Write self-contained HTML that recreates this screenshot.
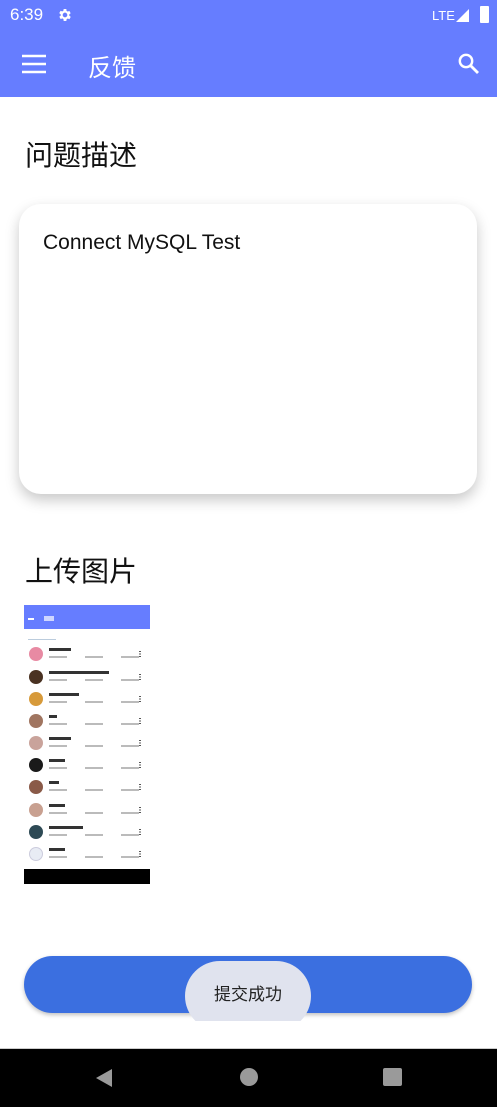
<!DOCTYPE html>
<html><head><meta charset="utf-8"><style>
*{margin:0;padding:0;box-sizing:border-box}
body{width:497px;height:1107px;position:relative;background:#fff;font-family:"Liberation Sans","Noto Sans CJK SC",sans-serif;overflow:hidden}
.abs{position:absolute}
.top{left:0;top:0;width:497px;height:97px;background:#667dff}
.h{font-size:28px;color:#111;left:25px}
.card{left:19px;top:204px;width:458px;height:290px;border-radius:22px;background:#fff;box-shadow:0 6px 14px rgba(0,0,0,.22)}
.thumb{left:24px;top:605px;width:126px;height:279px;background:#fff;overflow:hidden}
.row{position:absolute;left:0;width:126px;height:23px}
.av{position:absolute;left:5px;top:4px;width:14px;height:14px;border-radius:50%}
.t1{position:absolute;left:25px;top:5px;height:3px;background:#333}
.t2{position:absolute;left:25px;top:13px;height:2px;width:90px;background:repeating-linear-gradient(90deg,#bbb 0 18px,transparent 18px 36px)}
.dots{position:absolute;right:9px;top:8px;width:2px;height:6px;background:repeating-linear-gradient(#555 0 1px,transparent 1px 2.5px)}
</style></head><body>
<div class="abs top"></div>
<div class="abs" style="left:10px;top:5px;color:#fff;font-size:17px">6:39</div>
<svg class="abs" style="left:57px;top:7px" width="16" height="16" viewBox="0 0 24 24"><path fill="#fff" d="M19.4 13a7.5 7.5 0 000-2l2.1-1.6-2-3.5-2.5 1a7 7 0 00-1.7-1L15 3h-4l-.4 2.7a7 7 0 00-1.7 1l-2.5-1-2 3.5L6.6 11a7.5 7.5 0 000 2l-2.1 1.6 2 3.5 2.5-1a7 7 0 001.7 1L11 21h4l.4-2.7a7 7 0 001.7-1l2.5 1 2-3.5zM13 15.5a3.5 3.5 0 110-7 3.5 3.5 0 010 7z" transform="translate(-1 0)"/></svg>
<div class="abs" style="left:432px;top:8px;color:#fff;font-size:13px">LTE</div>
<svg class="abs" style="left:455px;top:7px" width="16" height="16" viewBox="0 0 16 16"><path fill="#fff" d="M1 15L14 2v13z"/></svg>
<div class="abs" style="left:480px;top:6px;width:9px;height:17px;background:#fff;border-radius:1px"></div>
<svg class="abs" style="left:22px;top:54px" width="24" height="20" viewBox="0 0 24 20"><path stroke="#fff" stroke-width="2.6" d="M0 2h24M0 10h24M0 18h24"/></svg>
<div class="abs" style="left:88px;top:48px;color:#fff;font-size:24px">反馈</div>
<svg class="abs" style="left:457px;top:52px" width="24" height="24" viewBox="0 0 24 24"><circle cx="9" cy="9" r="6.2" stroke="#fff" stroke-width="2.4" fill="none"/><path stroke="#fff" stroke-width="2.8" d="M13.5 13.5L21 21"/></svg>
<div class="abs h" style="top:134px">问题描述</div>
<div class="abs card"></div>
<div class="abs" style="left:43px;top:231px;font-size:21px;color:#111">Connect MySQL Test</div>
<div class="abs h" style="top:550px">上传图片</div>
<div class="abs thumb">
<div class="abs" style="left:0;top:0;width:126px;height:24px;background:#667dff"></div>
<div class="abs" style="left:4px;top:13px;width:6px;height:2px;background:#fff"></div>
<div class="abs" style="left:20px;top:11px;width:10px;height:5px;background:#cfd6ff"></div>
<div class="abs" style="left:0;top:24px;width:126px;height:12px;background:#fff"></div>
<div class="abs" style="left:4px;top:34px;width:28px;height:1px;background:#bcd"></div>
<div class="row" style="top:38px"><div class="av" style="background:#e88aa3"></div><div class="t1" style="width:22px"></div><div class="t2"></div><div class="dots"></div></div>
<div class="row" style="top:61px"><div class="av" style="background:#4a3222"></div><div class="t1" style="width:60px"></div><div class="t2"></div><div class="dots"></div></div>
<div class="row" style="top:83px"><div class="av" style="background:#d79a3a"></div><div class="t1" style="width:30px"></div><div class="t2"></div><div class="dots"></div></div>
<div class="row" style="top:105px"><div class="av" style="background:#a07560"></div><div class="t1" style="width:8px"></div><div class="t2"></div><div class="dots"></div></div>
<div class="row" style="top:127px"><div class="av" style="background:#c9a39b"></div><div class="t1" style="width:22px"></div><div class="t2"></div><div class="dots"></div></div>
<div class="row" style="top:149px"><div class="av" style="background:#1a1a1a"></div><div class="t1" style="width:16px"></div><div class="t2"></div><div class="dots"></div></div>
<div class="row" style="top:171px"><div class="av" style="background:#8a5a48"></div><div class="t1" style="width:10px"></div><div class="t2"></div><div class="dots"></div></div>
<div class="row" style="top:194px"><div class="av" style="background:#c8a090"></div><div class="t1" style="width:16px"></div><div class="t2"></div><div class="dots"></div></div>
<div class="row" style="top:216px"><div class="av" style="background:#2e4a55"></div><div class="t1" style="width:34px"></div><div class="t2"></div><div class="dots"></div></div>
<div class="row" style="top:238px"><div class="av" style="background:#e8ecf4;border:1px solid #ccd"></div><div class="t1" style="width:16px"></div><div class="t2"></div><div class="dots"></div></div>
<div class="abs" style="left:0;top:264px;width:126px;height:15px;background:#000"></div>
</div>
<div class="abs" style="left:24px;top:956px;width:448px;height:57px;border-radius:29px;background:#3b6fe0;box-shadow:0 2px 4px rgba(0,0,0,.25)"></div>
<div class="abs" style="left:226px;top:968px;font-size:20px;color:#7a9ae8">提交</div>
<div class="abs" style="left:185px;top:961px;width:126px;height:60px;overflow:hidden"><div style="width:126px;height:70px;border-radius:35px;background:#e0e3ee"></div></div>
<div class="abs" style="left:214px;top:980px;font-size:17px;color:#222">提交成功</div>
<div class="abs" style="left:0;top:1048px;width:497px;height:1px;background:#ccc"></div>
<div class="abs" style="left:0;top:1049px;width:497px;height:58px;background:#000"></div>
<svg class="abs" style="left:95px;top:1068px" width="18" height="20" viewBox="0 0 18 20"><path fill="#9a9a9a" d="M17 1v18L1 10z"/></svg>
<div class="abs" style="left:240px;top:1068px;width:18px;height:18px;border-radius:50%;background:#9a9a9a"></div>
<div class="abs" style="left:383px;top:1068px;width:19px;height:18px;border-radius:2px;background:#9a9a9a"></div>
</body></html>
